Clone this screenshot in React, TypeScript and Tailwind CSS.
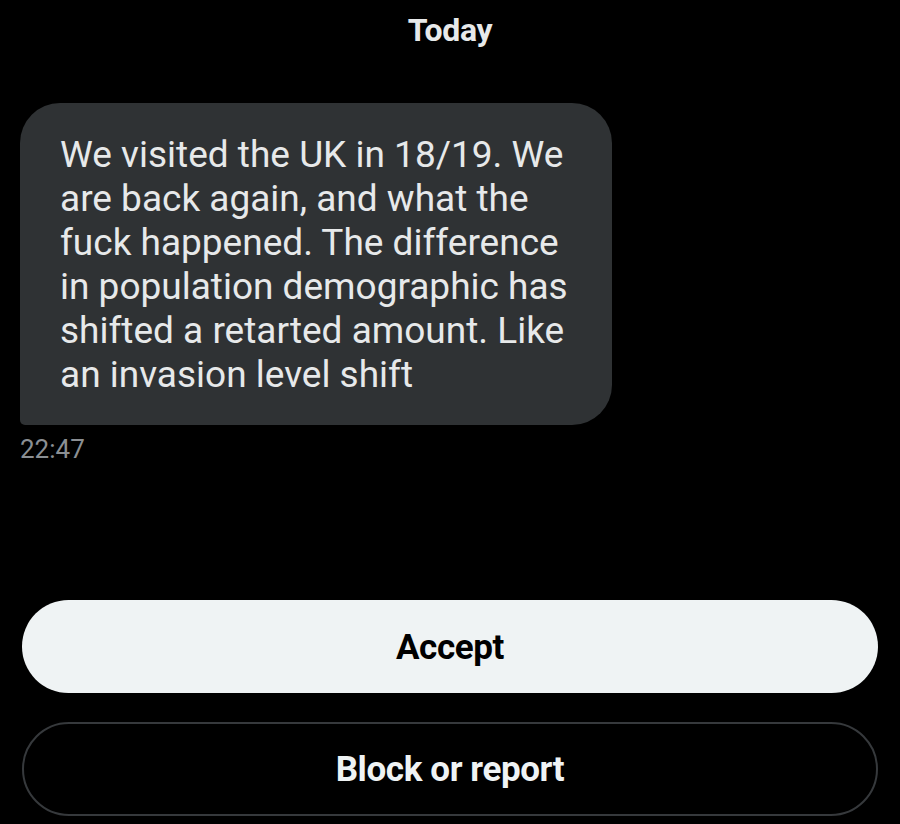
const MESSAGE =
  "We visited the UK in 18/19. We are back again, and what the fuck happened. The difference in population demographic has shifted a retarted amount. Like an invasion level shift";

export default function App() {
  return (
    <div className="w-[900px] h-[824px] bg-black text-[#e7e9ea] flex flex-col overflow-hidden font-['Roboto',sans-serif]">
      {/* Date divider */}
      <div className="pt-[10px] text-center text-[32px] font-bold leading-[40px] tracking-[-0.3px]">
        Today
      </div>

      {/* Incoming message */}
      <div className="mt-[53px] px-[20px]">
        <div className="w-[592px] bg-[#2f3234] rounded-[40px] rounded-bl-[5px] pl-[40px] pr-[32px] pt-[30px] pb-[28px]">
          <p className="text-[37px] leading-[44px]">{MESSAGE}</p>
        </div>
        <div className="mt-[7px] text-[26px] leading-[34px] text-[#8b8f93]">22:47</div>
      </div>

      <div className="flex-1" />

      {/* Actions */}
      <div className="px-[22px] pb-[8px] flex flex-col gap-[29px]">
        <button className="h-[93px] pt-[3px] rounded-full bg-[#eff3f4] text-black text-[35px] font-bold tracking-[-0.4px]">
          Accept
        </button>
        <button className="h-[94px] pt-[2px] rounded-full border-2 border-[#36393c] bg-black text-[#eff3f4] text-[35px] font-bold tracking-[-0.4px]">
          Block or report
        </button>
      </div>
    </div>
  );
}
